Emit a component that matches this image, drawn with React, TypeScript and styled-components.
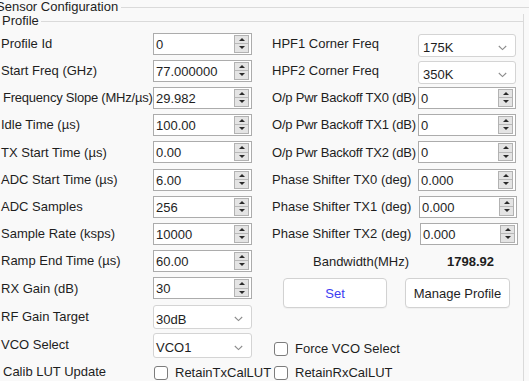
import React from 'react';
import styled, { createGlobalStyle } from 'styled-components';

const GlobalStyle = createGlobalStyle`
  html, body { margin: 0; padding: 0; background: #f9f9f9; }
  body {
    font-family: "Liberation Sans", Arial, sans-serif;
    font-size: 13px;
    color: #1e1e1e;
  }
`;

const Screen = styled.div`
  width: 529px;
  height: 381px;
  overflow: hidden;
  background: #f9f9f9;
`;

const GroupHeader = styled.div<{ $indent: number }>`
  display: flex;
  align-items: center;
  height: 14px;
  margin-left: ${p => p.$indent}px;
`;

const GroupTitle = styled.span`
  line-height: 14px;
  white-space: nowrap;
`;

const Rule = styled.div<{ $gap: number }>`
  flex: 1;
  height: 1px;
  background: #dadada;
  margin-left: ${p => p.$gap}px;
`;

const Panel = styled.div`
  width: 523px;
  height: 367px;
  border-right: 1px solid #dadada;
`;

const FormGrid = styled.div`
  display: grid;
  grid-template-columns: 152px 99px 20px 146px 98px;
  grid-template-rows: 27px 27px 27px 27px 28px 27px 27px 27px 27px 28px 29px 27px 26px;
  margin-top: 2px;
  padding-left: 1px;
`;

type Cell = { $col: number; $row: number };

const Label = styled.div<Cell & { $tight?: boolean; $ml?: number }>`
  grid-column: ${p => p.$col};
  grid-row: ${p => p.$row};
  align-self: center;
  white-space: nowrap;
  line-height: 15px;
  margin-left: ${p => p.$ml ?? 0}px;
  letter-spacing: ${p => (p.$tight ? '-0.22px' : 'normal')};
`;

const SpinBox = styled.div<Cell & { $w: number; $dx?: number }>`
  grid-column: ${p => p.$col};
  grid-row: ${p => p.$row};
  align-self: center;
  justify-self: start;
  margin-left: ${p => p.$dx ?? 0}px;
  width: ${p => p.$w}px;
  height: 22px;
  box-sizing: border-box;
  border: 1px solid #acacac;
  background: #fff;
  display: flex;
  align-items: center;
`;

const SpinValue = styled.span`
  flex: 1;
  padding: 1px 0 0 2px;
  line-height: 15px;
  white-space: nowrap;
  overflow: hidden;
`;

const Spinner = styled.div`
  width: 15px;
  height: 18px;
  margin-right: 2px;
  box-sizing: border-box;
  border: 1px solid #b2b2b2;
  background: #e4e4e4;
  display: flex;
  flex-direction: column;
`;

const SpinHalf = styled.div<{ $down?: boolean }>`
  flex: 1;
  display: flex;
  align-items: center;
  justify-content: center;
  border-top: ${p => (p.$down ? '1px solid #b8b8b8' : 'none')};
  &::after {
    content: '';
    width: 0;
    height: 0;
    border-left: 3px solid transparent;
    border-right: 3px solid transparent;
    ${p => (p.$down ? 'border-top: 3px solid #2a2a2a;' : 'border-bottom: 3px solid #2a2a2a;')}
  }
`;

const Select = styled.div<Cell & { $w: number; $h: number; $mt: number; $pl: number }>`
  grid-column: ${p => p.$col};
  grid-row: ${p => p.$row};
  align-self: start;
  justify-self: start;
  margin-top: ${p => p.$mt}px;
  width: ${p => p.$w}px;
  height: ${p => p.$h}px;
  box-sizing: border-box;
  border: 1px solid #d4d4d4;
  border-radius: 3px;
  background: #fff;
  display: flex;
  align-items: center;
  justify-content: space-between;
  padding: 4px 8px 0 ${p => p.$pl}px;
  line-height: 15px;
`;

const Chevron = () => (
  <svg width="9" height="6" viewBox="0 0 9 6">
    <polyline points="0.8,1 4.5,4.6 8.2,1" fill="none" stroke="#8c8c8c" strokeWidth="1.1" />
  </svg>
);

const CheckField = styled.div<Cell & { $ml: number; $mb: number }>`
  grid-column: ${p => p.$col} / span 2;
  grid-row: ${p => p.$row};
  align-self: end;
  margin-bottom: ${p => p.$mb}px;
  margin-left: ${p => p.$ml}px;
  display: flex;
  align-items: center;
  gap: 7px;
  white-space: nowrap;
  line-height: 15px;
`;

const CheckBox = styled.span`
  width: 14px;
  height: 14px;
  box-sizing: border-box;
  border: 1px solid #7c7c7c;
  border-radius: 3px;
  background: #fff;
`;

const Readout = styled.div<Cell & { $pl: number; $bold?: boolean }>`
  grid-column: ${p => p.$col};
  grid-row: ${p => p.$row};
  align-self: center;
  padding: 2px 0 0 ${p => p.$pl}px;
  line-height: 15px;
  white-space: nowrap;
  font-weight: ${p => (p.$bold ? 700 : 400)};
`;

const ButtonBar = styled.div`
  grid-column: 4 / 6;
  grid-row: 10 / 12;
  display: flex;
  align-items: flex-start;
  gap: 18px;
  padding: 4px 0 0 11px;
`;

const Button = styled.button<{ $w: number; $accent?: boolean }>`
  width: ${p => p.$w}px;
  height: 30px;
  box-sizing: border-box;
  border: 1px solid #d2d2d2;
  border-radius: 4px;
  background: #fff;
  font-family: inherit;
  font-size: 13px;
  color: ${p => (p.$accent ? '#3c3cf2' : '#1e1e1e')};
  padding: 0;
  box-shadow: 0 1px 1px rgba(0, 0, 0, 0.04);
`;

const Spin = ({ col, row, w, dx, value }: { col: number; row: number; w: number; dx?: number; value: string }) => (
  <SpinBox $col={col} $row={row} $w={w} $dx={dx}>
    <SpinValue>{value}</SpinValue>
    <Spinner>
      <SpinHalf />
      <SpinHalf $down />
    </Spinner>
  </SpinBox>
);

const leftSpins: [string, string, boolean?, number?][] = [
  ['Profile Id', '0'],
  ['Start Freq (GHz)', '77.000000'],
  ['Frequency Slope (MHz/µs)', '29.982', true, 2],
  ['Idle Time (µs)', '100.00'],
  ['TX Start Time (µs)', '0.00'],
  ['ADC Start Time (µs)', '6.00'],
  ['ADC Samples', '256'],
  ['Sample Rate (ksps)', '10000'],
  ['Ramp End Time (µs)', '60.00'],
  ['RX Gain (dB)', '30'],
];

const rightSpins: [string, string, boolean, number][] = [
  ['O/p Pwr Backoff TX0 (dB)', '0', true, 0],
  ['O/p Pwr Backoff TX1 (dB)', '0', true, 0],
  ['O/p Pwr Backoff TX2 (dB)', '0', true, 0],
  ['Phase Shifter TX0 (deg)', '0.000', false, 0],
  ['Phase Shifter TX1 (deg)', '0.000', false, 1],
  ['Phase Shifter TX2 (deg)', '0.000', false, 2],
];

export default function App() {
  return (
    <Screen>
      <GlobalStyle />
      <GroupHeader $indent={-4}>
        <GroupTitle>Sensor Configuration</GroupTitle>
        <Rule $gap={3} />
      </GroupHeader>
      <Panel>
        <GroupHeader $indent={2}>
          <GroupTitle>Profile</GroupTitle>
          <Rule $gap={2} />
        </GroupHeader>
        <FormGrid>
          {leftSpins.map(([label, value, tight, ml], i) => (
            <React.Fragment key={label}>
              <Label $col={1} $row={i + 1} $tight={tight} $ml={ml}>{label}</Label>
              <Spin col={2} row={i + 1} w={99} value={value} />
            </React.Fragment>
          ))}
          <Label $col={1} $row={11}>RF Gain Target</Label>
          <Select $col={2} $row={11} $w={99} $h={24} $mt={3} $pl={2}>
            <span>30dB</span>
            <Chevron />
          </Select>
          <Label $col={1} $row={12}>VCO Select</Label>
          <Select $col={2} $row={12} $w={99} $h={25} $mt={2} $pl={2}>
            <span>VCO1</span>
            <Chevron />
          </Select>
          <Label $col={1} $row={13} $ml={2}>Calib LUT Update</Label>
          <CheckField $col={2} $row={13} $ml={1} $mb={4}>
            <CheckBox />
            <span>RetainTxCalLUT</span>
          </CheckField>

          <Label $col={4} $row={1}>HPF1 Corner Freq</Label>
          <Select $col={5} $row={1} $w={98} $h={23} $mt={4} $pl={4}>
            <span>175K</span>
            <Chevron />
          </Select>
          <Label $col={4} $row={2}>HPF2 Corner Freq</Label>
          <Select $col={5} $row={2} $w={98} $h={23} $mt={4} $pl={4}>
            <span>350K</span>
            <Chevron />
          </Select>
          {rightSpins.map(([label, value, tight, dx], i) => (
            <React.Fragment key={label}>
              <Label $col={4} $row={i + 3} $tight={tight}>{label}</Label>
              <Spin col={5} row={i + 3} w={98} dx={dx} value={value} />
            </React.Fragment>
          ))}
          <Readout $col={4} $row={9} $pl={41}>Bandwidth(MHz)</Readout>
          <Readout $col={5} $row={9} $pl={29} $bold>1798.92</Readout>
          <ButtonBar>
            <Button $w={104} $accent>Set</Button>
            <Button $w={105}>Manage Profile</Button>
          </ButtonBar>
          <CheckField $col={4} $row={12} $ml={2} $mb={2}>
            <CheckBox />
            <span>Force VCO Select</span>
          </CheckField>
          <CheckField $col={4} $row={13} $ml={2} $mb={4}>
            <CheckBox />
            <span>RetainRxCalLUT</span>
          </CheckField>
        </FormGrid>
      </Panel>
    </Screen>
  );
}
